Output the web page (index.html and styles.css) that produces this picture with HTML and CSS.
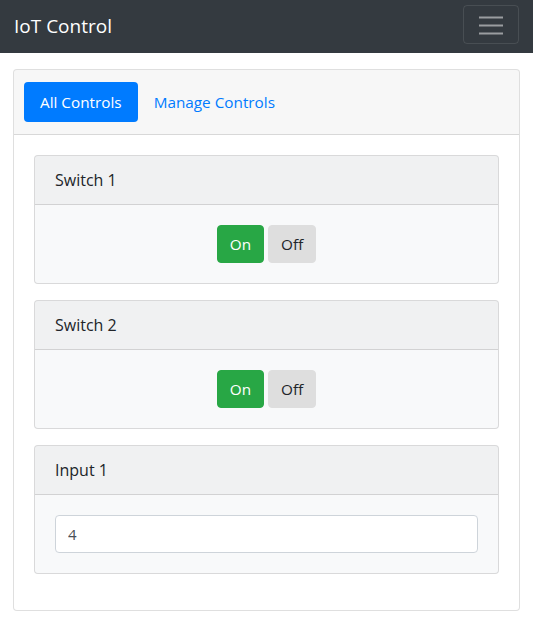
FILE: index.html
```html
<!DOCTYPE html>
<html lang="en">
<head>
<meta charset="utf-8">
<title>IoT Control</title>
<link rel="stylesheet" href="styles.css">
</head>
<body>
<nav class="navbar">
  <span class="brand">IoT Control</span>
  <button class="toggler" type="button" aria-label="Toggle navigation">
    <svg class="toggler-icon" width="30" height="30" viewBox="0 0 30 30">
      <path d="M3 7.5h24M3 15.5h24M3 23.5h24" stroke="rgba(255,255,255,0.5)" stroke-width="2" fill="none"/>
    </svg>
  </button>
</nav>
<main class="container">
  <section class="card outer">
    <header class="card-header tabs">
      <a class="pill active" href="#">All Controls</a>
      <a class="pill" href="#">Manage Controls</a>
    </header>
    <div class="card-body">
      <div class="card inner">
        <div class="card-header">Switch 1</div>
        <div class="card-body center">
          <button class="btn on" type="button">On</button>
          <button class="btn off" type="button">Off</button>
        </div>
      </div>
      <div class="card inner">
        <div class="card-header">Switch 2</div>
        <div class="card-body center">
          <button class="btn on" type="button">On</button>
          <button class="btn off" type="button">Off</button>
        </div>
      </div>
      <div class="card inner">
        <div class="card-header">Input 1</div>
        <div class="card-body">
          <input class="field" type="text" value="4">
        </div>
      </div>
    </div>
  </section>
</main>
</body>
</html>
```

FILE: styles.css
```css
* { box-sizing: border-box; }
html, body {
  margin: 0;
  padding: 0;
}
body {
  font-family: "Open Sans", "Noto Sans", "Liberation Sans", sans-serif;
  font-size: 16px;
  line-height: 24px;
  color: #212529;
  background: #fff;
}
.navbar {
  height: 53px;
  background: #343a40;
  display: flex;
  justify-content: space-between;
  align-items: flex-start;
  padding: 5px 14px 0 14px;
}
.brand {
  color: #fff;
  font-size: 19px;
  line-height: 30px;
  margin-top: 6px;
}
.toggler {
  width: 56px;
  height: 39px;
  background: transparent;
  border: 1px solid rgba(255,255,255,0.1);
  border-radius: 4px;
  padding: 0;
  display: flex;
  align-items: center;
  justify-content: center;
}
.toggler-icon { display: block; }
.container {
  padding: 16px 13px 0 13px;
}
.card {
  border: 1px solid rgba(0,0,0,0.125);
  border-radius: 4px;
  background: #fff;
  overflow: hidden;
}
.card-header {
  background: rgba(0,0,0,0.03);
  border-bottom: 1px solid rgba(0,0,0,0.125);
  padding: 12px 20px;
}
.tabs {
  display: flex;
  padding: 12px 10px;
}
.pill {
  display: block;
  padding: 8px 16px;
  border-radius: 4px;
  color: #007bff;
  text-decoration: none;
  font-size: 15.3px;
}
.pill.active {
  background: #007bff;
  color: #fff;
}
.card-body {
  padding: 20px;
}
.inner {
  background: #f8f9fa;
  margin-bottom: 16px;
}
.center {
  display: flex;
  justify-content: center;
  gap: 4px;
}
.btn {
  font-family: inherit;
  font-size: 15.3px;
  line-height: 24px;
  height: 38px;
  padding: 6px 12px;
  border: 1px solid transparent;
  border-radius: 4px;
}
.btn.on {
  background: #28a745;
  border-color: #28a745;
  color: #fff;
}
.btn.off {
  background: #dedede;
  border-color: #dedede;
  color: #212529;
}
.field {
  display: block;
  width: 100%;
  height: 38px;
  padding: 6px 12px;
  font-family: inherit;
  font-size: 15px;
  line-height: 24px;
  color: #495057;
  background: #fff;
  border: 1px solid #ced4da;
  border-radius: 4px;
}
```
